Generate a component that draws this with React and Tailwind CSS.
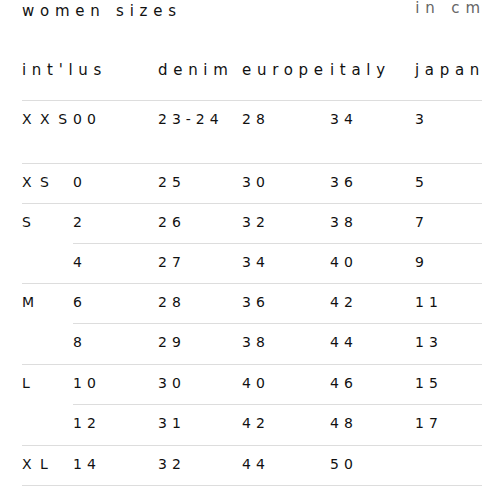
const columns = ['int\'lus', 'denim', 'europe', 'italy', 'japan']

const rows = [
  { intl: 'XXS', us: '00', denim: '23-24', europe: '28', italy: '34', japan: '3', full: true, height: 'h-[63px]' },
  { intl: 'XS', us: '0', denim: '25', europe: '30', italy: '36', japan: '5', full: true, height: 'h-10' },
  { intl: 'S', us: '2', denim: '26', europe: '32', italy: '38', japan: '7', full: false, height: 'h-10' },
  { intl: '', us: '4', denim: '27', europe: '34', italy: '40', japan: '9', full: true, height: 'h-10' },
  { intl: 'M', us: '6', denim: '28', europe: '36', italy: '42', japan: '11', full: false, height: 'h-10' },
  { intl: '', us: '8', denim: '29', europe: '38', italy: '44', japan: '13', full: true, height: 'h-[41px]' },
  { intl: 'L', us: '10', denim: '30', europe: '40', italy: '46', japan: '15', full: false, height: 'h-10' },
  { intl: '', us: '12', denim: '31', europe: '42', italy: '48', japan: '17', full: true, height: 'h-[41px]' },
  { intl: 'XL', us: '14', denim: '32', europe: '44', italy: '50', japan: '', full: true, height: 'h-10' },
]

function SizeRow({ row }) {
  return (
    <div className={`flex ${row.height}`}>
      <div
        className={`w-[51px] shrink-0 pt-[9px] tracking-[8.5px] ${
          row.full ? 'border-b border-[#dddddd]' : ''
        }`}
      >
        {row.intl}
      </div>
      <div className="flex-1 grid grid-cols-[85px_84px_88px_85px_1fr] border-b border-[#dddddd] pt-[9px] tracking-[5px]">
        <div>{row.us}</div>
        <div>{row.denim}</div>
        <div>{row.europe}</div>
        <div>{row.italy}</div>
        <div>{row.japan}</div>
      </div>
    </div>
  )
}

export default function App() {
  return (
    <div className="w-[500px] h-[499px] bg-white text-[#111111] font-['DejaVu_Sans',sans-serif]">
      <div className="flex justify-between items-start h-6 pl-[22px] pr-[14px]">
        <h1 className="text-[15px] leading-[22px] tracking-[5.75px] font-normal">women sizes</h1>
        <span className="text-[15px] leading-4 tracking-[5.9px] text-[#666666]">in cm</span>
      </div>

      <div className="mx-[22px] w-[460px]">
        <div className="grid grid-cols-[136px_84px_88px_85px_1fr] h-[77px] pt-[36px] border-b border-[#dddddd] text-[15px] leading-5 tracking-[5.7px]">
          {columns.map((col) => (
            <div key={col}>{col}</div>
          ))}
        </div>

        <div className="text-[14px] leading-[19px]">
          {rows.map((row, i) => (
            <SizeRow key={i} row={row} />
          ))}
        </div>
      </div>
    </div>
  )
}
